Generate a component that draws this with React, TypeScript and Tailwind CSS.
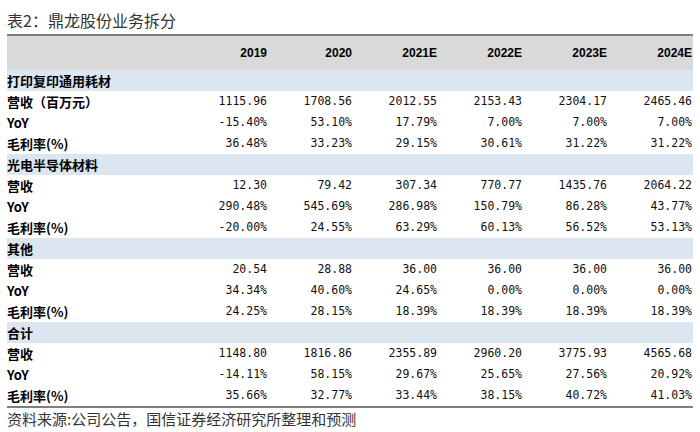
import React from "react";

type Row = { label: string; values?: string[]; section?: boolean };

const rows: Row[] = [
  { label: "打印复印通用耗材", section: true },
  { label: "营收（百万元）", values: ["1115.96", "1708.56", "2012.55", "2153.43", "2304.17", "2465.46"] },
  { label: "YoY", values: ["-15.40%", "53.10%", "17.79%", "7.00%", "7.00%", "7.00%"] },
  { label: "毛利率(%)", values: ["36.48%", "33.23%", "29.15%", "30.61%", "31.22%", "31.22%"] },
  { label: "光电半导体材料", section: true },
  { label: "营收", values: ["12.30", "79.42", "307.34", "770.77", "1435.76", "2064.22"] },
  { label: "YoY", values: ["290.48%", "545.69%", "286.98%", "150.79%", "86.28%", "43.77%"] },
  { label: "毛利率(%)", values: ["-20.00%", "24.55%", "63.29%", "60.13%", "56.52%", "53.13%"] },
  { label: "其他", section: true },
  { label: "营收", values: ["20.54", "28.88", "36.00", "36.00", "36.00", "36.00"] },
  { label: "YoY", values: ["34.34%", "40.60%", "24.65%", "0.00%", "0.00%", "0.00%"] },
  { label: "毛利率(%)", values: ["24.25%", "28.15%", "18.39%", "18.39%", "18.39%", "18.39%"] },
  { label: "合计", section: true },
  { label: "营收", values: ["1148.80", "1816.86", "2355.89", "2960.20", "3775.93", "4565.68"] },
  { label: "YoY", values: ["-14.11%", "58.15%", "29.67%", "25.65%", "27.56%", "20.92%"] },
  { label: "毛利率(%)", values: ["35.66%", "32.77%", "33.44%", "38.15%", "40.72%", "41.03%"] },
];

const years = ["2019", "2020", "2021E", "2022E", "2023E", "2024E"];

export default function App() {
  return (
    <div className="w-[700px] h-[432px] bg-white overflow-hidden px-[7px] font-['Noto_Sans_CJK_SC',sans-serif]">
      <div className="h-[34px] pt-[11px] text-[16px] leading-[18px] text-[#333]">
        表2：鼎龙股份业务拆分
      </div>
      <div className="w-[686px] border-t-2 border-b-2 border-[#7f7f7f]">
        <div className="grid grid-cols-[176px_repeat(6,85px)] h-[34px] bg-[#d9d9d9] items-center">
          <div />
          {years.map((y) => (
            <div
              key={y}
              className="text-right text-[12px] font-bold text-black pr-[1px] font-['Liberation_Sans',Arial,sans-serif]"
            >
              {y}
            </div>
          ))}
        </div>
        {rows.map((r, i) =>
          r.section ? (
            <div
              key={i}
              className="h-[21px] bg-[#dce6f1] flex items-center text-[13px] font-bold text-black"
            >
              {r.label}
            </div>
          ) : (
            <div key={i} className="grid grid-cols-[176px_repeat(6,85px)] h-[21px] items-center">
              <div className="text-[13px] font-bold text-black leading-[21px]">{r.label}</div>
              {r.values!.map((v, j) => (
                <div
                  key={j}
                  className="text-right text-[11.5px] text-[#111] pr-[1px] font-['DejaVu_Sans_Mono',monospace]"
                >
                  {v}
                </div>
              ))}
            </div>
          )
        )}
      </div>
      <div className="pt-[1px] text-[15px] leading-[20px] text-[#333]">
        资料来源:公司公告，国信证券经济研究所整理和预测
      </div>
    </div>
  );
}
